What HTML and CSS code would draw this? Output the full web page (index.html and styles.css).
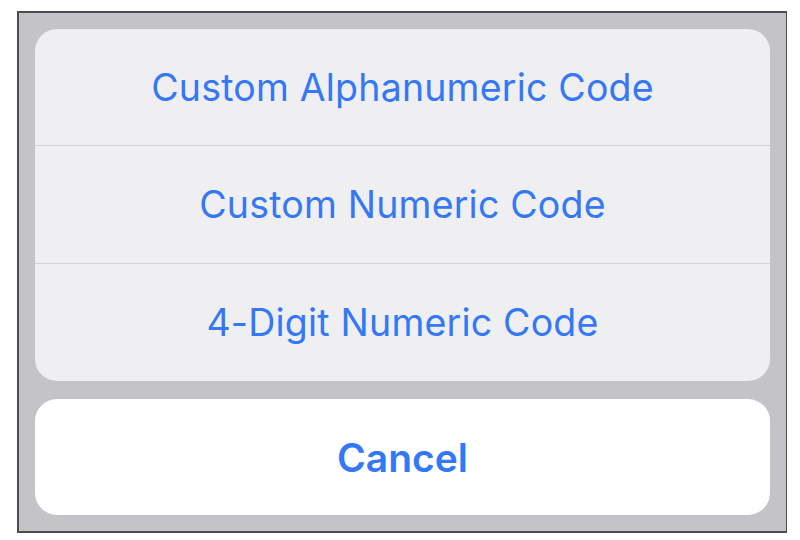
FILE: index.html
```html
<!DOCTYPE html>
<html lang="en">
<head>
  <meta charset="UTF-8">
  <title>Passcode Options</title>
  <link rel="stylesheet" href="styles.css">
</head>
<body>
  <div class="frame">
    <div class="sheet">
      <div class="option">Custom Alphanumeric Code</div>
      <div class="option">Custom Numeric Code</div>
      <div class="option">4-Digit Numeric Code</div>
    </div>
    <div class="cancel">Cancel</div>
  </div>
</body>
</html>
```

FILE: styles.css
```css
body {
  margin: 0;
  background-color: #fff;
  font-family: Inter, "Noto Sans", sans-serif;
}

.frame {
  box-sizing: border-box;
  width: 770px;
  height: 522px;
  margin: 11px 0 0 17px;
  padding: 16px;
  border: 2px solid #4d4d4d;
  border-right-width: 1.5px;
  background-color: #c3c3c8;
  display: flex;
  flex-direction: column;
  gap: 18px;
}

.sheet {
  background-color: #efeff1;
  border-radius: 22px;
  overflow: hidden;
}

.option {
  height: 117px;
  display: flex;
  align-items: center;
  justify-content: center;
  color: #3478f6;
  font-size: 37.5px;
  letter-spacing: 0.2px;
  border-top: 1px solid #d2d2d5;
}

.option:first-child {
  border-top: none;
  height: 116px;
}

.cancel {
  height: 116px;
  background-color: #fff;
  border-radius: 22px;
  display: flex;
  align-items: center;
  justify-content: center;
  color: #3478f6;
  font-size: 39px;
  font-weight: 600;
}
```
